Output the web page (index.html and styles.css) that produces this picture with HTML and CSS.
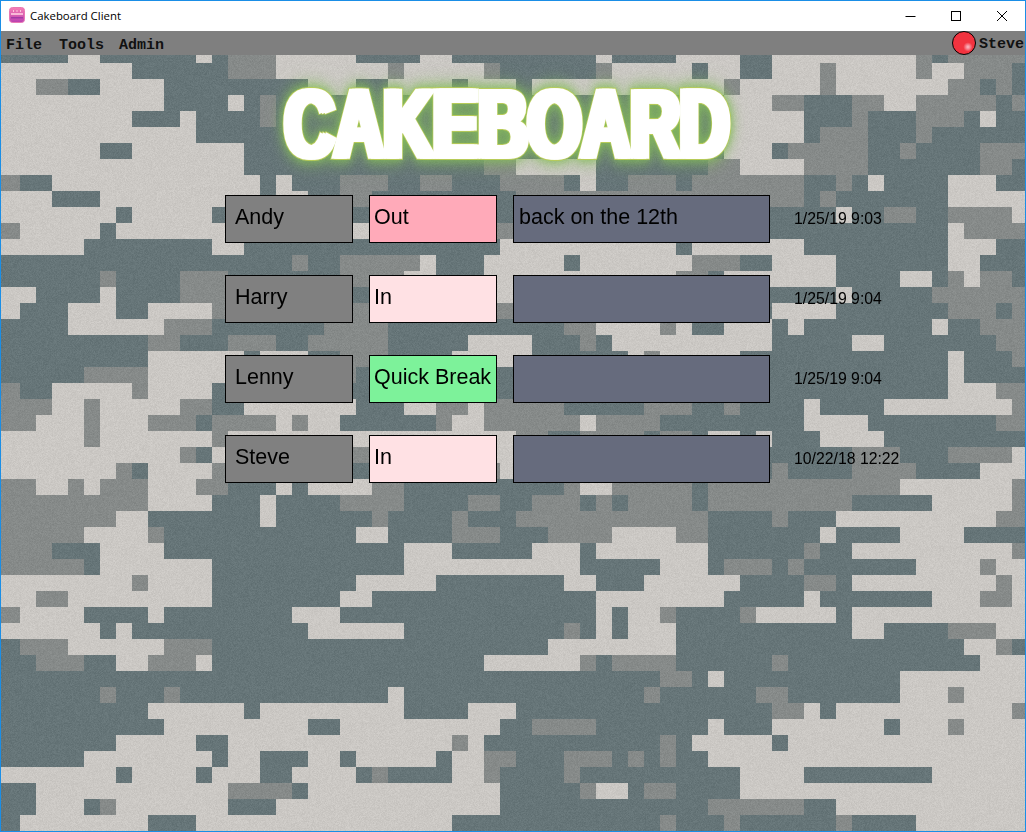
FILE: index.html
```html
<!DOCTYPE html>
<html lang="en">
<head>
<meta charset="utf-8">
<title>Cakeboard Client</title>
<link rel="stylesheet" href="styles.css">
</head>
<body>
<div class="window">
  <header class="titlebar">
    <svg class="app-icon" width="16" height="16" viewBox="0 0 16 16">
      <defs><linearGradient id="cake" x1="0" y1="0" x2="0" y2="1"><stop offset="0" stop-color="#f77fb4"/><stop offset="1" stop-color="#b93fb0"/></linearGradient></defs>
      <rect x="0.5" y="0.5" width="15" height="15" rx="3" fill="url(#cake)" stroke="#e878b4" stroke-width="1"/>
      <rect x="2" y="6" width="12" height="2" fill="#f9b8d8"/>
      <rect x="2" y="10" width="12" height="1.5" fill="#a03aa6"/>
      <rect x="4" y="3" width="1" height="2" fill="#fbc4dc"/><rect x="7.5" y="3" width="1" height="2" fill="#fbc4dc"/><rect x="11" y="3" width="1" height="2" fill="#fbc4dc"/>
    </svg>
    <span class="app-title">Cakeboard Client</span>
    <div class="controls">
      <svg width="46" height="30" viewBox="0 0 46 30"><path d="M18.5 15.5h10" stroke="#000" fill="none"/></svg>
      <svg width="46" height="30" viewBox="0 0 46 30"><rect x="18.5" y="10.5" width="9" height="9" stroke="#000" fill="none"/></svg>
      <svg width="46" height="30" viewBox="0 0 46 30"><path d="M18 10l10 10M28 10l-10 10" stroke="#000" fill="none"/></svg>
    </div>
  </header>
  <nav class="menubar">
    <span class="menu-item">File</span>
    <span class="menu-item">Tools</span>
    <span class="menu-item">Admin</span>
    <span class="user"><i class="led"></i><span class="user-name">Steve</span></span>
  </nav>
  <main class="board">
    <canvas class="camo" id="camo" width="1024" height="776"></canvas>
    <h1 class="logo">
      <svg class="logo-art" width="480" height="72" viewBox="0 0 480 72">
        <g transform="scale(0.705 1)">
          <g class="logo-edge">
            <use href="#logo-word" x="-4.3"/><use href="#logo-word"/><use href="#logo-word" x="4.3"/>
          </g>
          <g class="logo-fill">
            <use href="#logo-word" x="-4.3"/><use href="#logo-word" x="4.3"/>
            <text id="logo-word" x="21" y="69.5">CAKEBOARD</text>
          </g>
        </g>
      </svg>
    </h1>
    <section class="grid">
      <div class="cell name">Andy</div><div class="cell status out">Out</div><div class="cell note">back on the 12th</div><div class="stamp">1/25/19 9:03</div>
      <div class="cell name">Harry</div><div class="cell status in">In</div><div class="cell note"></div><div class="stamp">1/25/19 9:04</div>
      <div class="cell name">Lenny</div><div class="cell status quick">Quick Break</div><div class="cell note"></div><div class="stamp">1/25/19 9:04</div>
      <div class="cell name">Steve</div><div class="cell status in">In</div><div class="cell note"></div><div class="stamp">10/22/18 12:22</div>
    </section>
  </main>
</div>
<script src="camo.js"></script>
</body>
</html>
```
FILE: styles.css
```css
* { box-sizing: border-box; }
html, body { margin: 0; height: 100%; overflow: hidden; }
.window {
  height: 832px;
  border: 1px solid #1a8ee6;
  display: flex;
  flex-direction: column;
  background: #fff;
}
.titlebar {
  height: 30px;
  display: flex;
  align-items: center;
  background: #fff;
  padding-left: 8px;
  flex: none;
}
.app-icon { flex: none; margin-bottom: 2px; }
.app-title {
  margin-left: 5px;
  margin-bottom: 2px;
  font: 11.4px "Open Sans", "Liberation Sans", sans-serif;
  color: #000;
}
.controls { margin-left: auto; display: flex; }
.controls svg { display: block; }
.menubar {
  height: 24px;
  flex: none;
  background: #7f7f7f;
  display: flex;
  align-items: center;
  gap: 14px;
  padding-left: 5px;
  font: bold 15px/24px "Liberation Mono", monospace;
  color: #111;
}
.menu-item { padding-top: 6px; height: 30px; }
.menu-item:nth-child(2) { margin-left: 3px; }
.menu-item:nth-child(3) { margin-left: 1px; }
.user {
  margin-left: auto;
  display: flex;
  align-items: center;
  gap: 3px;
  margin-right: 1px;
}
.user-name { padding-top: 4px; }
.led {
  width: 24px;
  height: 24px;
  border-radius: 50%;
  border: 1px solid #000;
  background: radial-gradient(circle at 68% 68%, #f9c0c6 0, #f78a96 9%, #f2333f 22%);
}
.board {
  position: relative;
  flex: 1;
  overflow: hidden;
  background: #c9c6c2;
  padding: 32px 0 0 224px;
}
.camo { position: absolute; left: 0; top: 0; }
.logo {
  position: relative;
  margin: 0 0 36px 45px;
  width: 480px;
  height: 72px;
}
.logo-art {
  display: block;
  overflow: visible;
  font: bold 97px "Liberation Sans", sans-serif;
}
.logo-edge {
  fill: #b9cc5a;
  stroke: #b9cc5a;
  stroke-width: 5.5px;
  stroke-linejoin: miter;
  filter: drop-shadow(0 0 5px rgba(135,190,90,.85)) drop-shadow(0 0 9px rgba(130,185,90,.75));
}
.logo-fill {
  fill: #fff;
  stroke: #fff;
  stroke-width: 3.5px;
  stroke-linejoin: miter;
}
.grid {
  position: relative;
  display: grid;
  grid-template-columns: 128px 128px 257px auto;
  grid-auto-rows: 48px;
  gap: 32px 16px;
  justify-content: start;
}
.cell {
  border: 1px solid #000;
  display: flex;
  align-items: center;
  padding-bottom: 3px;
  font: 21.5px "Liberation Sans", sans-serif;
  color: #000;
  white-space: nowrap;
}
.name { background: #808080; padding-left: 9px; }
.status { padding-left: 4px; }
.out { background: #ffaab9; }
.in { background: #ffe1e4; }
.quick { background: #7df29a; }
.note { background: #666b7d; padding-left: 5px; }
.stamp {
  align-self: center;
  margin-left: 8px;
  font: 15.8px "Liberation Sans", sans-serif;
  color: #000;
  white-space: nowrap;
}
```
FILE: camo.js
```js
// Digital camouflage: each row lists runs as colour + last column (16px cells).
var rows = [
"D3L5D11L12D13M16L21D25L27D36L37D41L45D47L56M57D58M63",
"L7D13M16L23M24L29M30D36M37L42D43L45D47L50M51L56M57L59M62D63",
"L1M3D5L9D18L21D23L27D28L31D32L44M45L50M51L58M60D61M62D63",
"L9D13L14D15M16D44L47M49D52M54L56M61D62M63",
"L7D10L11D15M16D44L49D52M53D56M59D60L61D63",
"L11D44L49D50M53D56M57D63",
"L5D7L14D44L47D48M53D55M56D60M63",
"L14D29M31L36D43M45L49M53D60M62D63",
"M0D2L15D16L17D20M23D25M27D30M34D35L36D38M41D42M49D51M52D53L54D58L61D63",
"L2D5L15D16L18D20M22D31M49D50M51D58L63",
"L6D7L12D51L52D54M56D58M62L63",
"M0L5D6L22M31D58L59M63",
"L4D12L14D30L41D42L49D58L61D63",
"D17M18D20M25L26D29L34D35L42M45D47L51D58L60D63",
"D5M6D10M13D20M24L26D29L41M43D44L51D55L57D58M59L60M62D63",
"L1D5L6D10M13D22L31D51L52D57M63",
"L0D3L6D8L12M31D47L51D58M61D62M63",
"D3L9M12D19M23D34M36L40M41L42D44L47D48L49D57L58D60M63",
"D8M10D13M16D18M23D28L32D35M36D37L47D52L54D61M63",
"D8L14D15L18D20M23D27L32D38L39M40L45D58L59D62M63",
"D4M8L13M21D31M32D58L59D63",
"M0D2L7M8L12D58L61M63",
"M2L4M5L10M12D14L21D24L26M28L29M34D39M42D44M45D49L50D54L62M63",
"M1L4M5L8M11D12M16L17M18L20D26M27L29M35L36M40D49L53D61M63",
"L4M5L12M13L31M33D35M39D40M42D43L45D46L47D50L54D63",
"L10M11D12L13M22L32D52M55D58M62L63",
"L6M7D8L12M13D22M30L32D47M48D52M56D60L63",
"M1L3M4L5M8L11M13D16L17D18L22M24D34M35L37M42D43M55L62M63",
"M8L12D15L16D20M24D28M30D32M35D36M37D38M42D43M52D57L62M63",
"M6L8D15L16D22M23D27M28D31M43D47M48D51L61M63",
"M4L8M9D21L23D27M30D33M37L41M43D50L51D55L59D63",
"M2D5L9D24L27D32L35D36L43D49M50D52L62M63",
"M4D5L12D24L35D40L43D44M47D48M49D56L60M61L63",
"L7M8L12D21L26D34L36D39L45D49M51D52L61M62L63",
"L1M3L12D20L22D36L44D49L50D57L60M62L63",
"M0L4D8L9D17L20D36L37D38L40M41D45M46L51D52L63",
"L5D6L7D18L24D34M35D36L37D38L41D52L54D58M61L63",
"D0M3L9M12D33L41D59L61M62D63",
"D1M4D6L8M11L12D29L35M36D37M41D47M48D60L63",
"D40M42D43L44D55L63",
"D5M6D9M10D23L24D39M40D46M48D55L58M59L63",
"D8L14D15L24D28L31D47M49L50D51L62M63",
"D9L18D20L30D32M36D43L44D47L54D55L58M59L63",
"D6L11D13L27M28L29D40M41D42L47D48L63",
"D4L12D13L15D18L20D21L26D27L29M31D34M37D38M39D40M41D43L63",
"L6D7L11D12L15D17L21D22M23D27L29M30D34M35D45L49D57L63",
"D1L13M17D18L30D35M36L38D39M41D45L63",
"D1L4D5M6L13D16L30D43M49D51L63",
"D0L8D11L27D40M41D44M45D51M52D56L63"
];
var colours = { L: "#cbc8c4", D: "#667578", M: "#868a89" };
var canvas = document.getElementById("camo");
var ctx = canvas.getContext("2d");
ctx.filter = "blur(0.5px)";
rows.forEach(function (row, r) {
  // board starts at page (1,55); rows start at y = 47 and columns at x = 4
  var y = 47 + 16 * r - 55;
  var start = 0, re = /([LDM])(\d+)/g, m;
  while ((m = re.exec(row))) {
    var end = +m[2];
    var x0 = start === 0 ? -4 : 3 + 16 * start;
    var x1 = end === 63 ? 1030 : 3 + 16 * (end + 1);
    ctx.fillStyle = colours[m[1]];
    ctx.fillRect(x0, y, x1 - x0, 16);
    start = end + 1;
  }
});
ctx.filter = "none";
var img = ctx.getImageData(0, 0, canvas.width, canvas.height);
var seed = 12345;
function rnd() { seed = (seed * 1664525 + 1013904223) >>> 0; return seed / 4294967296; }
for (var i = 0; i < img.data.length; i += 4) {
  var n = (rnd() + rnd() - 1) * 9;
  img.data[i] += n; img.data[i + 1] += n; img.data[i + 2] += n;
}
ctx.putImageData(img, 0, 0);
```
